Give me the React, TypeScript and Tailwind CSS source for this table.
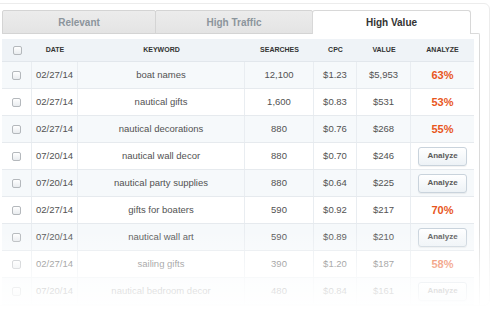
import React from 'react';

type Row = {
  date: string;
  keyword: string;
  searches: string;
  cpc: string;
  value: string;
  score: string | null;
};

const rows: Row[] = [
  { date: '02/27/14', keyword: 'boat names', searches: '12,100', cpc: '$1.23', value: '$5,953', score: '63%' },
  { date: '02/27/14', keyword: 'nautical gifts', searches: '1,600', cpc: '$0.83', value: '$531', score: '53%' },
  { date: '02/27/14', keyword: 'nautical decorations', searches: '880', cpc: '$0.76', value: '$268', score: '55%' },
  { date: '07/20/14', keyword: 'nautical wall decor', searches: '880', cpc: '$0.70', value: '$246', score: null },
  { date: '07/20/14', keyword: 'nautical party supplies', searches: '880', cpc: '$0.64', value: '$225', score: null },
  { date: '02/27/14', keyword: 'gifts for boaters', searches: '590', cpc: '$0.92', value: '$217', score: '70%' },
  { date: '07/20/14', keyword: 'nautical wall art', searches: '590', cpc: '$0.89', value: '$210', score: null },
  { date: '02/27/14', keyword: 'sailing gifts', searches: '390', cpc: '$1.20', value: '$187', score: '58%' },
  { date: '07/20/14', keyword: 'nautical bedroom decor', searches: '480', cpc: '$0.84', value: '$161', score: null },
];

const cols = 'grid grid-cols-[30px_46px_167px_69px_43px_54px_63px]';

function Checkbox() {
  return (
    <span className="block h-[9px] w-[9px] rounded-[2px] border border-[#b4b8bc] bg-gradient-to-b from-white to-[#e9ecef]" />
  );
}

function Cell({ children, last }: { children: React.ReactNode; last?: boolean }) {
  return (
    <div
      className={`flex items-center justify-center ${last ? '' : 'border-r border-[#e9edf1]'}`}
    >
      {children}
    </div>
  );
}

export default function App() {
  return (
    <div
      className="relative h-[310px] w-[492px] overflow-hidden bg-white pt-[3px]"
      style={{ fontFamily: '"Liberation Sans", Arial, sans-serif' }}
    >
      <div className="-ml-3 mr-[2px] rounded-md border border-[#ececec] pl-[13px] pt-[6px]">
        {/* tabs */}
        <div className="relative z-10 flex h-[24px]">
          <div className="flex w-[154px] items-center justify-center rounded-t-[2px] border border-[#d4d4d4] bg-gradient-to-b from-[#ececec] to-[#e4e4e4] text-[10px] font-bold text-[#8c959c]">
            Relevant
          </div>
          <div className="-ml-px flex w-[158px] items-center justify-center rounded-t-[2px] border border-[#d4d4d4] bg-gradient-to-b from-[#ececec] to-[#e4e4e4] text-[10px] font-bold text-[#8c959c]">
            High Traffic
          </div>
          <div className="-ml-px flex w-[159px] items-center justify-center rounded-t-[3px] border border-b-0 border-[#d8d8d8] bg-white text-[10px] font-bold text-[#333]">
            High Value
          </div>
        </div>

        {/* panel */}
        <div className="-mt-px mr-[9px] rounded-tr-[2px] border-r border-t border-[#dadada] pr-[5px] pt-[5px]">
          <div className="text-[9.5px] text-[#525252]">
            <div className={`${cols} h-[23px] border-b border-[#e2e7ec] bg-[#eff3f7] text-[7px] font-bold uppercase text-[#333]`}>
              <div className="flex items-center justify-center">
                <Checkbox />
              </div>
              <div className="flex items-center justify-center">Date</div>
              <div className="flex items-center justify-center">Keyword</div>
              <div className="flex items-center justify-center">Searches</div>
              <div className="flex items-center justify-center">CPC</div>
              <div className="flex items-center justify-center">Value</div>
              <div className="flex items-center justify-center">Analyze</div>
            </div>

            {rows.map((r, i) => (
              <div
                key={i}
                className={`${cols} h-[27px] border-b border-[#e6eaee] ${i % 2 === 0 ? 'bg-[#f6f9fb]' : 'bg-white'}`}
              >
                <Cell>
                  <Checkbox />
                </Cell>
                <Cell>{r.date}</Cell>
                <Cell>{r.keyword}</Cell>
                <Cell>{r.searches}</Cell>
                <Cell>{r.cpc}</Cell>
                <Cell>{r.value}</Cell>
                <Cell last>
                  {r.score ? (
                    <span className="text-[11px] font-bold text-[#e8561d]">{r.score}</span>
                  ) : (
                    <button className="h-[19px] w-[49px] rounded-[3px] border border-[#c9d3dc] bg-gradient-to-b from-white to-[#edf2f6] text-[8px] font-bold text-[#5a5a5a] shadow-[0_1px_1px_rgba(0,0,0,0.06)]">
                      Analyze
                    </button>
                  )}
                </Cell>
              </div>
            ))}
          </div>
        </div>
      </div>

      {/* fade out at the bottom */}
      <div className="pointer-events-none absolute bottom-0 left-0 right-0 z-20 h-[80px] bg-gradient-to-b from-white/0 via-white/70 via-60% to-white" />
    </div>
  );
}
